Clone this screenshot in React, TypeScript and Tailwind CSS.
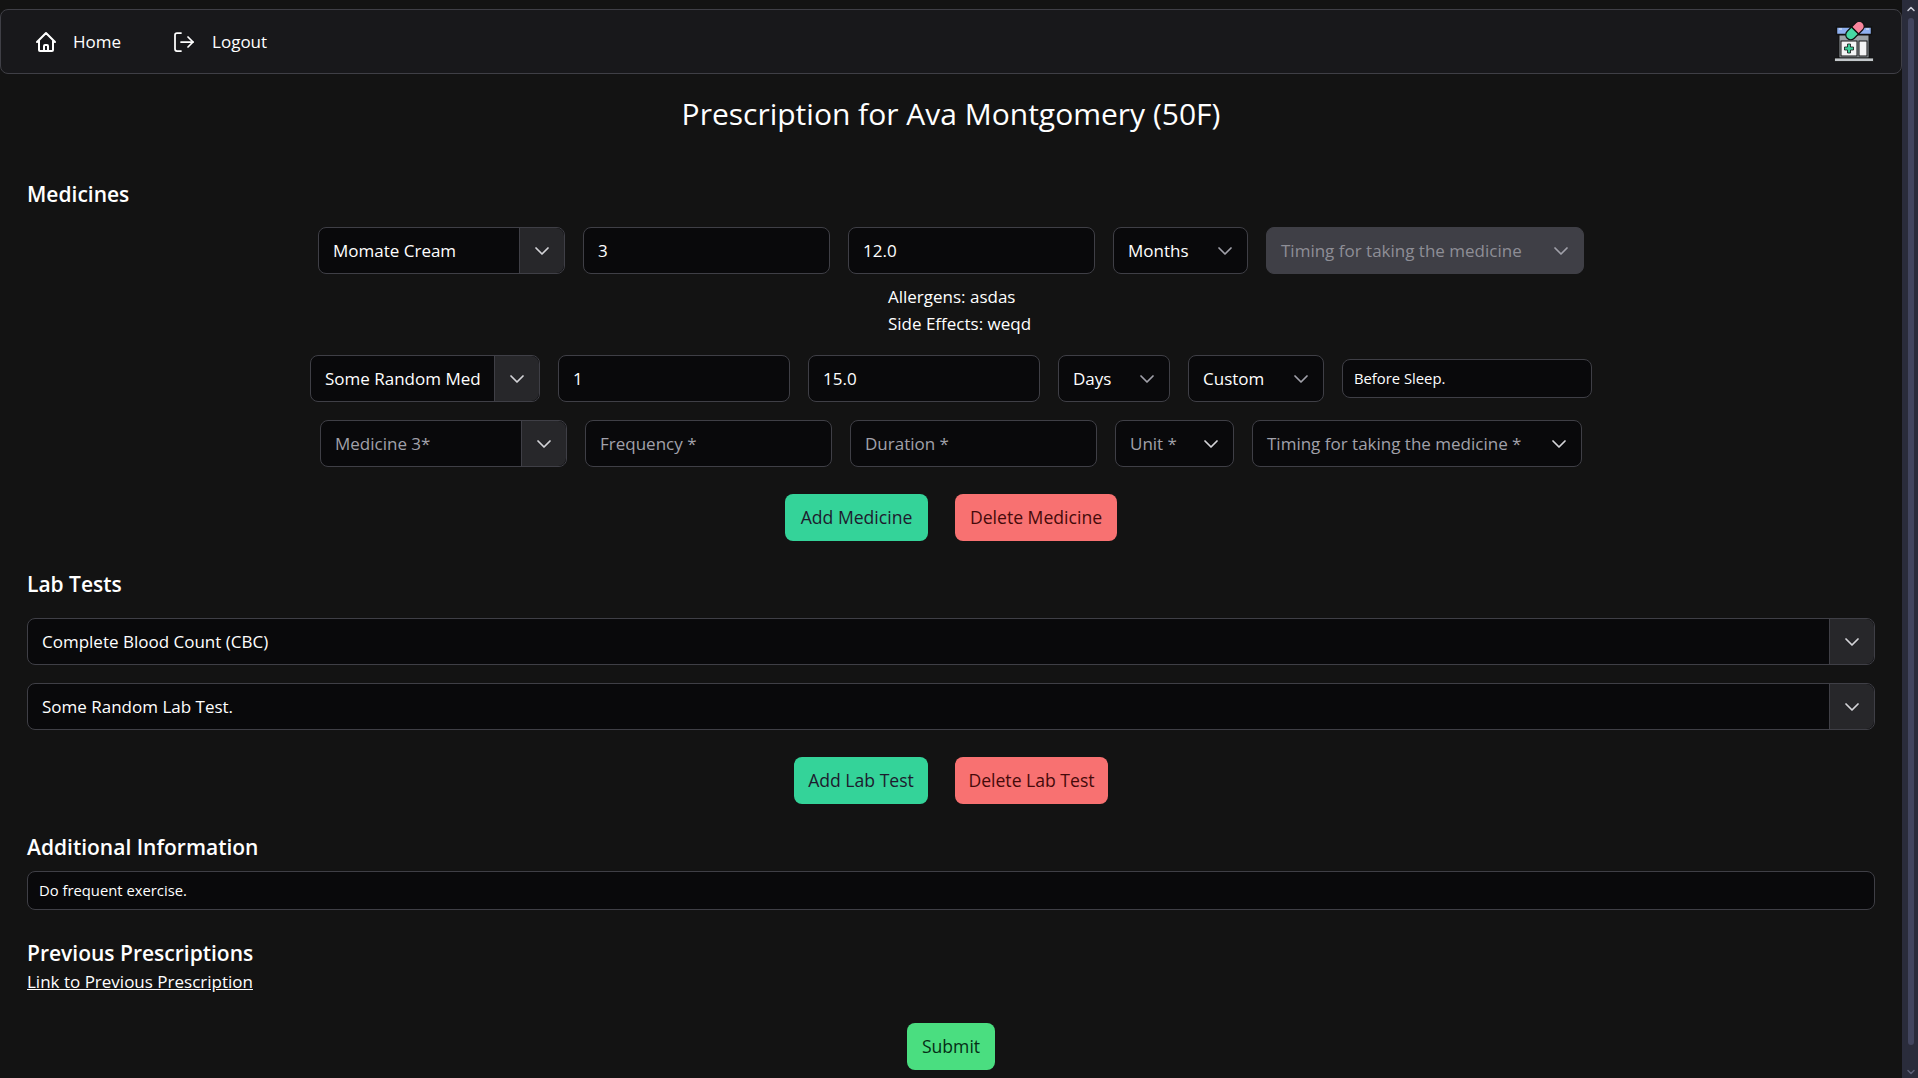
import { ChevronDown, ChevronUp, LogOut } from "lucide-react";
import { HiOutlineHome } from "react-icons/hi";

const ff = "font-['Open_Sans','Liberation_Sans',sans-serif]";

function Chevron({ className = "text-[#d4d4d8]" }: { className?: string }) {
  return <ChevronDown className={`size-[24px] ${className}`} strokeWidth={1.75} />;
}

function Combo({ value, width, placeholder }: { value: string; width: string; placeholder?: boolean }) {
  return (
    <div className={`flex h-[47px] items-center rounded-lg border border-[#3f3f46] bg-[#09090b] ${width}`}>
      <span className={`flex-1 truncate pl-[14px] text-[17px] ${placeholder ? "text-[#a1a1aa]" : "text-white"}`}>{value}</span>
      <span className="flex h-full w-[45px] shrink-0 items-center justify-center rounded-r-lg border-l border-[#3f3f46] bg-[#27272a]">
        <Chevron />
      </span>
    </div>
  );
}

function Field({ value, width, placeholder }: { value: string; width: string; placeholder?: boolean }) {
  return (
    <div className={`flex h-[47px] items-center rounded-lg border border-[#3f3f46] bg-[#09090b] px-[14px] text-[17px] ${width} ${placeholder ? "text-[#a1a1aa]" : "text-white"}`}>
      {value}
    </div>
  );
}

function Picker({ value, width, placeholder, disabled }: { value: string; width: string; placeholder?: boolean; disabled?: boolean }) {
  return (
    <div className={`flex h-[47px] items-center justify-between rounded-lg border border-[#3f3f46] pl-[14px] pr-[10px] text-[17px] ${width} ${disabled ? "bg-[#3f3f46] text-[#8e8e96]" : "bg-[#09090b]"} ${!disabled && placeholder ? "text-[#a1a1aa]" : ""} ${!disabled && !placeholder ? "text-white" : ""}`}>
      <span>{value}</span>
      <Chevron className={placeholder ? "text-[#d4d4d8]" : "text-[#a1a1aa]"} />
    </div>
  );
}

function Btn({ label, color, text, width }: { label: string; color: string; text: string; width: string }) {
  return <button className={`h-[47px] rounded-lg text-[17.6px] font-medium ${width} ${color} ${text}`}>{label}</button>;
}

function Logo() {
  return (
    <svg width="40" height="40" viewBox="0 0 40 40" className="shrink-0">
      <rect x="2.5" y="5" width="35" height="7.5" fill="#8fb0f0" stroke="#111" strokeWidth="1.5" />
      <rect x="5" y="6.5" width="3" height="1" fill="#e8eefc" />
      <rect x="32" y="6.5" width="3" height="1" fill="#e8eefc" />
      <rect x="5" y="13" width="30" height="23" fill="#9ca3a8" stroke="#111" strokeWidth="1" />
      <rect x="7" y="19" width="16" height="15" fill="#f4f4f5" stroke="#111" strokeWidth="1" />
      <rect x="25" y="19" width="8" height="15" fill="#f4f4f5" stroke="#111" strokeWidth="1" />
      <path d="M13.5 22h3v3h3v3h-3v3h-3v-3h-3v-3h3z" fill="#3ecf9a" stroke="#111" strokeWidth="0.8" />
      <rect x="0.5" y="36" width="39" height="3.5" fill="#c4c8cc" stroke="#111" strokeWidth="0.8" />
      <g transform="rotate(-45 21 8.5)">
        <path d="M21 3.5h6a5 5 0 0 1 0 10h-6z" fill="#f8859c" stroke="#111" strokeWidth="1.2" />
        <path d="M21 3.5h-6a5 5 0 0 0 0 10h6z" fill="#46d9a4" stroke="#111" strokeWidth="1.2" />
      </g>
    </svg>
  );
}

export default function App() {
  return (
    <div className={`flex h-screen overflow-hidden bg-[#131313] text-white ${ff}`}>
      <div className="min-w-0 flex-1 overflow-hidden">
        <div className="pt-[9px]">
          <nav className="flex h-[65px] items-center justify-between rounded-lg border border-[#3f3f46] bg-[#18181b] pl-[33px] pr-[27px]">
            <div className="flex items-center text-[17px]">
              <HiOutlineHome className="size-[24px]" />
              <span className="ml-[15px]">Home</span>
              <LogOut className="ml-[51px] size-[24px]" strokeWidth={1.75} />
              <span className="ml-[16px]">Logout</span>
            </div>
            <Logo />
          </nav>
        </div>

        <h1 className="mt-[18px] text-center text-[30px] leading-[44px]">Prescription for Ava Montgomery (50F)</h1>

        <div className="px-[27px]">
          <h2 className="mt-[43px] text-[21px] font-semibold leading-[30px]">Medicines</h2>

          <div className="mt-[18px] flex justify-center gap-[18px]">
            <Combo value="Momate Cream" width="w-[247px]" />
            <Field value="3" width="w-[247px]" />
            <Field value="12.0" width="w-[247px]" />
            <Picker value="Months" width="w-[135px]" />
            <Picker value="Timing for taking the medicine" width="w-[318px]" disabled />
          </div>
          <div className="ml-[17px] mt-[9px] flex justify-center text-[17px] leading-[27px]">
            <div className="flex flex-col items-start">
              <span>Allergens: asdas</span>
              <span>Side Effects: weqd</span>
            </div>
          </div>

          <div className="mt-[18px] flex items-center justify-center gap-[18px]">
            <Combo value="Some Random Med" width="w-[230px]" />
            <Field value="1" width="w-[232px]" />
            <Field value="15.0" width="w-[232px]" />
            <Picker value="Days" width="w-[112px]" />
            <Picker value="Custom" width="w-[136px]" />
            <div className="flex h-[39px] w-[250px] items-center rounded-lg border border-[#3f3f46] bg-[#09090b] px-[11px] text-[14.8px]">Before Sleep.</div>
          </div>

          <div className="mt-[18px] flex justify-center gap-[18px]">
            <Combo value="Medicine 3*" width="w-[247px]" placeholder />
            <Field value="Frequency *" width="w-[247px]" placeholder />
            <Field value="Duration *" width="w-[247px]" placeholder />
            <Picker value="Unit *" width="w-[119px]" placeholder />
            <Picker value="Timing for taking the medicine *" width="w-[330px]" placeholder />
          </div>

          <div className="mt-[27px] flex justify-center gap-[27px]">
            <Btn label="Add Medicine" width="w-[143px]" color="bg-[#34d399]" text="text-[#1e1b2e]" />
            <Btn label="Delete Medicine" width="w-[162px]" color="bg-[#f87171]" text="text-[#450a0a]" />
          </div>

          <h2 className="mt-[28px] text-[21px] font-semibold leading-[30px]">Lab Tests</h2>
          <div className="mt-[19px] flex flex-col gap-[18px]">
            <Combo value="Complete Blood Count (CBC)" width="w-full" />
            <Combo value="Some Random Lab Test." width="w-full" />
          </div>

          <div className="mt-[27px] flex justify-center gap-[27px]">
            <Btn label="Add Lab Test" width="w-[134px]" color="bg-[#34d399]" text="text-[#1e1b2e]" />
            <Btn label="Delete Lab Test" width="w-[153px]" color="bg-[#f87171]" text="text-[#450a0a]" />
          </div>

          <h2 className="mt-[28px] text-[21px] font-semibold leading-[30px]">Additional Information</h2>
          <div className="mt-[9px] flex h-[39px] items-center rounded-lg border border-[#3f3f46] bg-[#09090b] px-[11px] text-[14.8px]">Do frequent exercise.</div>

          <h2 className="mt-[28px] text-[21px] font-semibold leading-[30px]">Previous Prescriptions</h2>
          <a className="block text-[17px] leading-[28px] underline">Link to Previous Prescription</a>

          <div className="mt-[27px] flex justify-center">
            <Btn label="Submit" width="w-[88px]" color="bg-[#4ade80]" text="text-[#052e16]" />
          </div>
        </div>
      </div>

      <div className="relative w-[16px] shrink-0 bg-[#2a2c3b]">
        <ChevronUp className="absolute left-[3px] top-[3px] size-[12px] text-[#c9cbd6]" strokeWidth={3} />
        <span className="absolute bottom-[33px] right-[4px] top-[18px] w-[6px] rounded-full bg-[#42455e]" />
        <ChevronDown className="absolute bottom-0 left-[3px] size-[12px] text-[#5e6178]" strokeWidth={3} />
      </div>
    </div>
  );
}
